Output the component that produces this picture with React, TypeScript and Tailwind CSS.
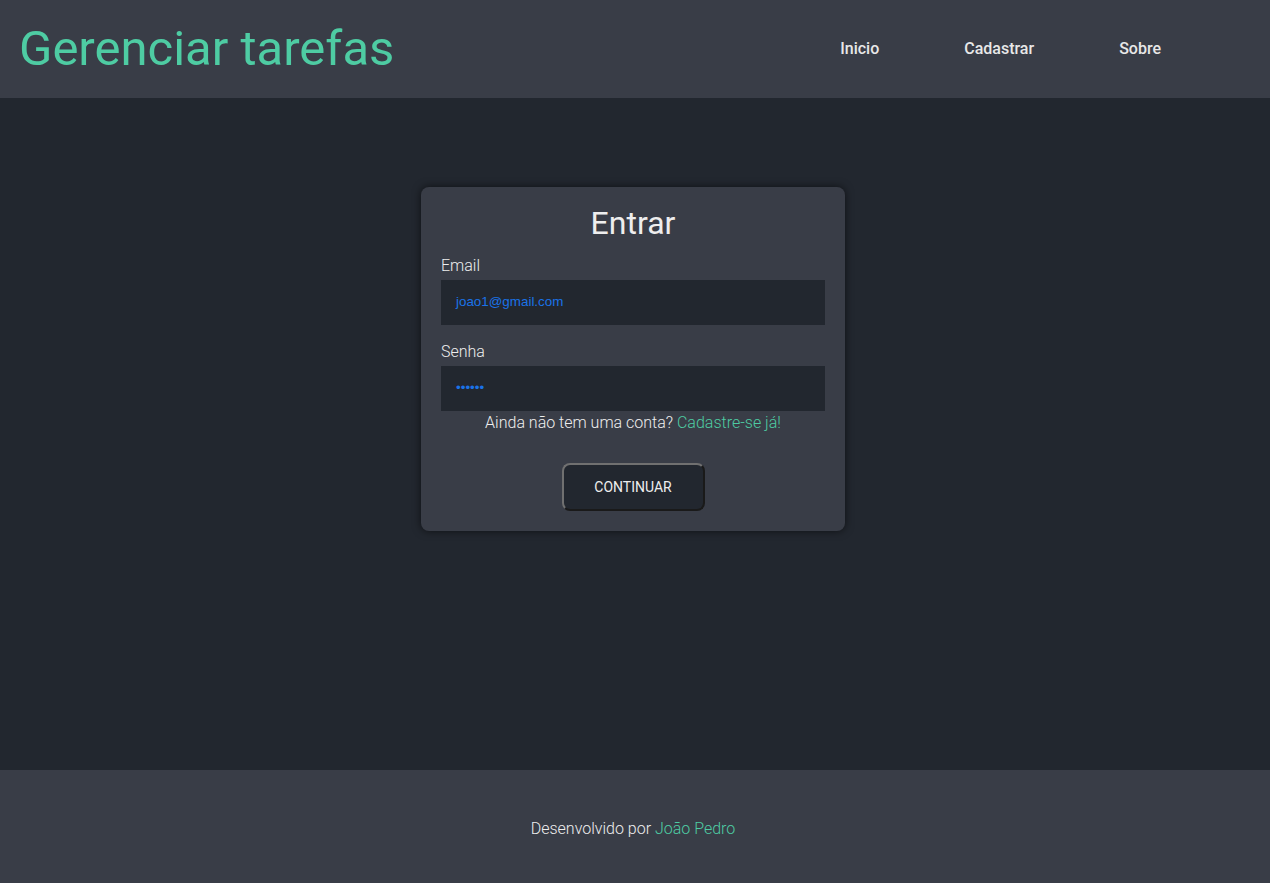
import React from "react";

export default function App() {
  return (
    <div className="min-h-screen flex flex-col bg-[#22272f]" style={{ fontFamily: "Roboto, 'Liberation Sans', sans-serif" }}>
      <header className="h-[98px] bg-[#393d47] flex items-center justify-between pl-[19px] pr-[109px]">
        <h1 className="text-[49px] leading-none text-[#4ecca3] font-normal -mt-[1px]">Gerenciar tarefas</h1>
        <nav className="flex items-center gap-[85px] text-[16px] font-medium text-[#e8e8e8] -mt-[1px]">
          <a className="cursor-pointer">Inicio</a>
          <a className="cursor-pointer">Cadastrar</a>
          <a className="cursor-pointer">Sobre</a>
        </nav>
      </header>
      <main className="h-[672px] flex justify-center pt-[89px] pr-[4px]">
        <div className="w-[424px] h-fit bg-[#393d47] rounded-[8px] shadow-[0_0_8px_rgba(0,0,0,0.6)] px-[20px] pt-[16px] pb-[20px] flex flex-col">
          <h2 className="text-[32px] leading-[40px] text-center text-[#eeeeee] font-normal">Entrar</h2>
          <label className="mt-[13px] text-[16px] leading-[20px] font-light text-[#eeeeee]">Email</label>
          <div className="mt-[4px] h-[45px] bg-[#22272f] flex items-center pl-[15px] text-[13.4px] text-[#1a73e8]" style={{ fontFamily: "'Liberation Sans', Arial, sans-serif" }}>
            joao1@gmail.com
          </div>
          <label className="mt-[17px] text-[16px] leading-[20px] font-light text-[#eeeeee]">Senha</label>
          <div className="mt-[4px] h-[45px] bg-[#22272f] flex items-center pl-[15px] text-[13.4px] text-[#1a73e8]" style={{ fontFamily: "'Liberation Sans', Arial, sans-serif" }}>
            ••••••
          </div>
          <p className="mt-[2px] text-center text-[16px] leading-[20px] font-light text-[#eeeeee]">
            Ainda não tem uma conta? <span className="text-[#4ecca3]">Cadastre-se já!</span>
          </p>
          <div className="mt-[30px] flex justify-center">
            <button className="w-[143px] h-[48px] bg-[#22272f] rounded-[8px] border-2 border-t-[#707070] border-l-[#707070] border-r-[#1a1a1a] border-b-[#1a1a1a] text-[14px] text-[#eeeeee] font-normal">
              CONTINUAR
            </button>
          </div>
        </div>
      </main>
      <footer className="h-[113px] bg-[#393d47] flex items-center justify-center pt-[4px] pr-[4px] text-[16px] font-light text-[#eeeeee]">
        <span>
          Desenvolvido por <span className="text-[#4ecca3]">João Pedro</span>
        </span>
      </footer>
    </div>
  );
}
